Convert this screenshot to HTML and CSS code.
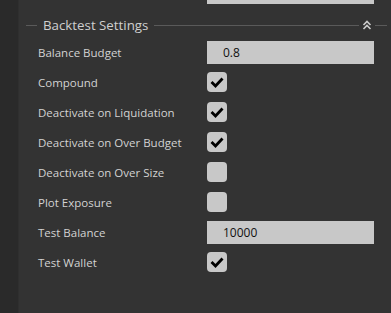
FILE: index.html
```html
<!DOCTYPE html>
<html lang="en">
<head>
  <meta charset="UTF-8">
  <meta name="viewport" content="width=device-width, initial-scale=1.0">
  <title>Backtest Settings</title>
  <link rel="stylesheet" href="styles.css">
</head>
<body>
  <div class="app">
    <aside class="sidebar"></aside>

    <main class="panel">
      <!-- tail of the previous section -->
      <div class="prev-field"><span class="prev-input"></span></div>

      <section class="group">
        <div class="group-head">
          <span class="line short"></span>
          <span class="group-title">Backtest Settings</span>
          <span class="line grow"></span>
          <svg class="collapse" width="10" height="10" viewBox="0 0 10 10">
            <polyline points="1.5,5 5,1.5 8.5,5" />
            <polyline points="1.5,9 5,5.5 8.5,9" />
          </svg>
          <span class="line end"></span>
        </div>

        <div class="row">
          <label for="balanceBudget">Balance Budget</label>
          <input type="text" id="balanceBudget" class="field" value="0.8">
        </div>
        <div class="row">
          <label>Compound</label>
          <span class="check on"></span>
        </div>
        <div class="row">
          <label>Deactivate on Liquidation</label>
          <span class="check on"></span>
        </div>
        <div class="row">
          <label>Deactivate on Over Budget</label>
          <span class="check on"></span>
        </div>
        <div class="row">
          <label>Deactivate on Over Size</label>
          <span class="check"></span>
        </div>
        <div class="row">
          <label>Plot Exposure</label>
          <span class="check"></span>
        </div>
        <div class="row">
          <label for="testBalance">Test Balance</label>
          <input type="text" id="testBalance" class="field" value="10000">
        </div>
        <div class="row">
          <label>Test Wallet</label>
          <span class="check on"></span>
        </div>
      </section>
    </main>
  </div>

  <script>
    // toggle the checkboxes
    document.querySelectorAll('.check').forEach(box => {
      box.addEventListener('click', () => box.classList.toggle('on'));
    });
  </script>
</body>
</html>
```

FILE: styles.css
```css
body {
  margin: 0;
  padding: 0;
  background-color: #333333;
  font-family: "Open Sans", "Noto Sans", Arial, sans-serif;
  color: #d2d2d2;
  overflow: hidden;
}
.app {
  display: flex;
  height: 313px;
}
.sidebar {
  width: 18px;
  background-color: #2a2a2a;
  border-right: 1px solid #2f2f2f;
}
.panel {
  flex: 1;
  padding: 0 4px 0 7px;
}
.prev-field {
  height: 4px;
  padding-left: 181px;
}
.prev-input {
  display: block;
  width: 167px;
  height: 4px;
  background: #c8c8c8;
}
.group-head {
  display: flex;
  align-items: center;
  height: 24px;
  margin-top: 9px;
}
.line {
  height: 1px;
  background: #5a5a5a;
}
.line.short {
  width: 11px;
}
.line.grow {
  flex: 1;
}
.line.end {
  width: 12px;
}
.group-title {
  font-size: 13.3px;
  color: #cfcfcf;
  padding: 0 6px;
}
.collapse {
  margin: 0 3px;
  fill: none;
  stroke: #cccccc;
  stroke-width: 1.6;
}
.row {
  display: flex;
  align-items: center;
  height: 30px;
  padding-left: 12px;
}
.row label {
  width: 169px;
  font-size: 11.5px;
}
.field {
  width: 167px;
  height: 23px;
  box-sizing: border-box;
  margin: 0;
  padding: 0 0 0 16px;
  border: none;
  background: #c8c8c8;
  color: #111;
  font-family: "Open Sans", Arial, sans-serif;
  font-size: 12px;
  outline: none;
}
.check {
  width: 20px;
  height: 20px;
  border-radius: 4px;
  background: #c8c8c8;
  cursor: pointer;
}
.check.on {
  background: #c8c8c8 url("data:image/svg+xml,%3Csvg xmlns='http://www.w3.org/2000/svg' width='20' height='20'%3E%3Cpolyline points='4.5,10 8.5,14 15.5,6.5' fill='none' stroke='%23000' stroke-width='2.8'/%3E%3C/svg%3E") no-repeat center;
}
```
